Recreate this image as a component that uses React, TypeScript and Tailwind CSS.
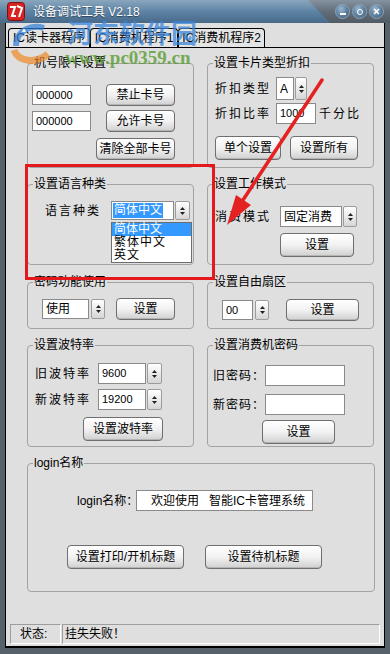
import * as React from "react";

function cn(...c: (string | false | undefined)[]) {
  return c.filter(Boolean).join(" ");
}

function Btn({ className, children }: { className?: string; children: React.ReactNode }) {
  return (
    <div
      className={cn(
        "flex shrink-0 items-center justify-center rounded-[4px] border border-[#6f6f6f] bg-linear-to-b from-white via-[#f2f2f2] to-[#d0d0d0] text-[12px] leading-none text-black shadow-[inset_0_-1px_0_#b5b5b5]",
        className,
      )}
    >
      {children}
    </div>
  );
}

function Spin({ className }: { className?: string }) {
  return (
    <div
      className={cn(
        "flex shrink-0 flex-col items-center justify-center gap-[2px] rounded-[2px] border border-[#9c9c9c] bg-linear-to-b from-white to-[#d6d6d6]",
        className,
      )}
    >
      <svg width="5" height="3" viewBox="0 0 5 3">
        <path d="M2.5 0L5 3H0z" fill="#222" />
      </svg>
      <svg width="5" height="3" viewBox="0 0 5 3">
        <path d="M0 0h5L2.5 3z" fill="#222" />
      </svg>
    </div>
  );
}

function Field({ className, children }: { className?: string; children?: React.ReactNode }) {
  return (
    <div
      className={cn(
        "flex shrink-0 items-center overflow-hidden border border-[#8a8a8a] bg-white pl-[3px] text-[11px] leading-none text-black",
        className,
      )}
    >
      {children}
    </div>
  );
}

function Label({ className, children }: { className?: string; children: React.ReactNode }) {
  return (
    <span className={cn("shrink-0 whitespace-nowrap text-[12px] leading-none text-black", className)}>
      {children}
    </span>
  );
}

function Group({
  title,
  className,
  children,
}: {
  title: string;
  className?: string;
  children?: React.ReactNode;
}) {
  return (
    <fieldset className={cn("relative min-w-0 shrink-0 rounded-[4px] border border-[#a3a3a3]", className)}>
      <legend className="ml-[5px] px-[1px] text-[12px] leading-[14px] text-black">{title}</legend>
      {children}
    </fieldset>
  );
}

function Tab({ className, children }: { className?: string; children: React.ReactNode }) {
  return (
    <div
      className={cn(
        "flex h-[19px] items-center justify-center rounded-t-[4px] border border-b-0 border-black bg-[#e4e4e4] text-[12px] leading-none text-black",
        className,
      )}
    >
      {children}
    </div>
  );
}

function Circle({ children }: { children: React.ReactNode }) {
  return (
    <div className="flex h-[15px] w-[15px] items-center justify-center rounded-full border border-[#8fa3b5] bg-radial-[at_40%_30%] from-[#9cb7cf] via-[#5f82a2] to-[#3b5874]">
      {children}
    </div>
  );
}

function TitleBar() {
  return (
    <div className="flex h-[23px] shrink-0 bg-linear-to-b from-[#8592a0] via-[#626e7a] to-[#4f5a64]">
      <div className="flex w-[330px] items-center bg-linear-to-b from-[#8aa6bd] via-[#5d84a5] to-[#48698a] pl-[7px] [clip-path:polygon(0_0,308px_0,330px_100%,0_100%)]">
        <svg width="18" height="19" viewBox="0 0 18 19">
          <rect x="0.5" y="0.5" width="17" height="18" rx="3" fill="#d92323" stroke="#7a1010" />
          <path d="M3 5h5l-3 9h4" fill="none" stroke="#fff" strokeWidth="2" />
          <path d="M10 4l5 2-3 9" fill="none" stroke="#fff" strokeWidth="2" />
        </svg>
        <span className="ml-[8px] text-[12px] leading-none text-white [text-shadow:0_1px_1px_rgba(0,0,0,0.45)]">
          设备调试工具 V2.18
        </span>
      </div>
      <div className="ml-auto mr-[6px] flex items-center gap-[2px]">
        <Circle>
          <span className="mt-[4px] h-[2px] w-[6px] bg-white" />
        </Circle>
        <Circle>
          <span className="h-[6px] w-[6px] rounded-full border-[1.5px] border-white" />
        </Circle>
        <Circle>
          <svg width="7" height="7" viewBox="0 0 7 7">
            <path d="M1 1l5 5M6 1L1 6" stroke="#fff" strokeWidth="1.5" />
          </svg>
        </Circle>
      </div>
    </div>
  );
}

function Annotations() {
  return (
    <>
      <div className="pointer-events-none absolute left-[8px] top-[20px] opacity-70">
        <svg width="56" height="44" viewBox="0 0 56 44">
          <path d="M8 26 C8 10 24 4 36 8" fill="none" stroke="#2f7fd8" strokeWidth="6" />
          <path d="M6 30 C10 42 28 44 40 34" fill="none" stroke="#f08a2a" strokeWidth="7" />
          <path d="M14 12l2 -4 2 4z" fill="#ffffff" />
        </svg>
      </div>
      <div className="pointer-events-none absolute left-[67px] top-[18px] font-['Noto_Sans_CJK_SC',sans-serif] text-[26px] font-bold leading-[28px] text-[#3b86da] opacity-75">
        河东软件园
      </div>
      <div className="pointer-events-none absolute left-[65px] top-[48px] font-['Liberation_Serif',serif] text-[19px] font-bold leading-none text-[#5a9e32] opacity-80">
        www.pc0359.cn
      </div>
      <div className="pointer-events-none absolute left-[25px] top-[164px] h-[116px] w-[190px] border-[3px] border-[#e3191c]" />
      <svg className="pointer-events-none absolute left-0 top-0" width="390" height="654" viewBox="0 0 390 654">
        <line x1="322" y1="80" x2="243" y2="200" stroke="#e42222" strokeWidth="3.5" strokeLinecap="round" />
        <polygon points="227,225 251,205 236,195" fill="#e42222" />
      </svg>
    </>
  );
}

export default function App() {
  return (
    <div className="relative flex h-[654px] w-[390px] flex-col overflow-hidden bg-[#56616c] font-['Liberation_Sans','Noto_Sans_CJK_SC',sans-serif] text-black">
      <TitleBar />
      <div className="mx-[5px] mb-[6px] flex flex-1 flex-col border-b-2 border-l border-r border-black bg-[#dfdfdf]">
        <div className="flex h-[24px] shrink-0 items-end pl-[2px]">
          <Tab className="w-[82px]">IC读卡器程序</Tab>
          <Tab className="w-[88px]">IC消费机程序1</Tab>
          <Tab className="w-[87px]">IC消费机程序2</Tab>
        </div>

        <div className="flex flex-1 flex-col border-t border-black pl-[21px] pt-[8px]">
          {/* row 1 */}
          <div className="flex gap-[13px]">
            <Group title="机号限卡设置" className="h-[112px] w-[167px]">
              <div className="mt-[14px] flex h-[22px] items-center">
                <Field className="ml-[4px] h-[20px] w-[59px]">000000</Field>
                <Btn className="ml-[15px] h-[22px] w-[69px]">禁止卡号</Btn>
              </div>
              <div className="mt-[4px] flex h-[22px] items-center">
                <Field className="ml-[4px] h-[20px] w-[59px]">000000</Field>
                <Btn className="ml-[15px] h-[22px] w-[69px]">允许卡号</Btn>
              </div>
              <Btn className="ml-[68px] mt-[6px] h-[22px] w-[79px]">清除全部卡号</Btn>
            </Group>
            <Group title="设置卡片类型折扣" className="h-[112px] w-[167px]">
              <div className="mt-[7px] flex h-[23px] items-center">
                <Label className="ml-[7px] w-[56px] tracking-[2px]">折扣类型</Label>
                <Field className="ml-[5px] h-[23px] w-[18px] text-[12px]">A</Field>
                <Spin className="ml-[1px] h-[23px] w-[12px]" />
              </div>
              <div className="mt-[3px] flex h-[21px] items-center">
                <Label className="ml-[7px] w-[56px] tracking-[2px]">折扣比率</Label>
                <Field className="ml-[5px] h-[21px] w-[40px]">1000</Field>
                <Label className="ml-[3px] tracking-[2px]">千分比</Label>
              </div>
              <div className="mt-[12px] flex">
                <Btn className="ml-[7px] h-[24px] w-[66px]">单个设置</Btn>
                <Btn className="ml-[9px] h-[24px] w-[68px]">设置所有</Btn>
              </div>
            </Group>
          </div>

          {/* row 2 */}
          <div className="mt-[9px] flex gap-[13px]">
            <Group title="设置语言种类" className="h-[88px] w-[167px]">
              <div className="mt-[10px] flex h-[19px] items-center">
                <Label className="ml-[17px] w-[60px] tracking-[2px]">语言种类</Label>
                <div className="relative ml-[6px] flex shrink-0">
                  <div className="flex h-[19px] w-[63px] items-center border border-[#8a8a8a] bg-white pl-[1px]">
                    <span className="bg-[#3399ff] px-[1px] text-[12px] leading-[15px] text-white">简体中文</span>
                  </div>
                  <Spin className="ml-[1px] h-[19px] w-[15px]" />
                  <div className="absolute left-0 top-[21px] z-10 flex w-[81px] flex-col border border-[#6d6d6d] bg-white">
                    <span className="h-[13px] bg-[#3399ff] pl-[2px] text-[12px] leading-[13px] text-white">简体中文</span>
                    <span className="h-[13px] pl-[2px] text-[12px] leading-[13px] tracking-[1px]">繁体中文</span>
                    <span className="h-[13px] pl-[2px] text-[12px] leading-[13px] tracking-[1px]">英文</span>
                  </div>
                </div>
              </div>
            </Group>
            <Group title="设置工作模式" className="h-[88px] w-[167px]">
              <div className="mt-[15px] flex h-[21px] items-center">
                <Label className="ml-[7px] w-[60px] tracking-[2px]">消费模式</Label>
                <Field className="ml-[5px] h-[21px] w-[62px] text-[12px]">固定消费</Field>
                <Spin className="ml-[1px] h-[21px] w-[14px]" />
              </div>
              <Btn className="ml-[72px] mt-[6px] h-[24px] w-[74px]">设置</Btn>
            </Group>
          </div>

          {/* row 3 */}
          <div className="mt-[10px] flex gap-[13px]">
            <Group title="密码功能使用" className="h-[54px] w-[167px]">
              <div className="mt-[9px] flex h-[22px] items-center">
                <Field className="ml-[14px] h-[20px] w-[47px] text-[12px]">使用</Field>
                <Spin className="ml-[2px] h-[20px] w-[14px]" />
                <Btn className="ml-[11px] h-[22px] w-[59px]">设置</Btn>
              </div>
            </Group>
            <Group title="设置自由扇区" className="h-[54px] w-[167px]">
              <div className="mt-[10px] flex h-[22px] items-center">
                <Field className="ml-[14px] h-[20px] w-[31px]">00</Field>
                <Spin className="ml-[2px] h-[20px] w-[14px]" />
                <Btn className="ml-[17px] h-[22px] w-[73px]">设置</Btn>
              </div>
            </Group>
          </div>

          {/* row 4 */}
          <div className="mt-[9px] flex gap-[13px]">
            <Group title="设置波特率" className="h-[109px] w-[167px]">
              <div className="mt-[11px] flex h-[21px] items-center">
                <Label className="ml-[7px] w-[58px] tracking-[2px]">旧波特率</Label>
                <Field className="ml-[5px] h-[21px] w-[48px]">9600</Field>
                <Spin className="ml-[1px] h-[21px] w-[15px]" />
              </div>
              <div className="mt-[5px] flex h-[21px] items-center">
                <Label className="ml-[7px] w-[58px] tracking-[2px]">新波特率</Label>
                <Field className="ml-[5px] h-[21px] w-[48px]">19200</Field>
                <Spin className="ml-[1px] h-[21px] w-[15px]" />
              </div>
              <Btn className="ml-[55px] mt-[7px] h-[24px] w-[80px]">设置波特率</Btn>
            </Group>
            <Group title="设置消费机密码" className="h-[109px] w-[167px]">
              <div className="mt-[13px] flex h-[21px] items-center">
                <Label className="ml-[5px] w-[52px] tracking-[1px]">旧密码：</Label>
                <Field className="h-[21px] w-[80px]" />
              </div>
              <div className="mt-[8px] flex h-[21px] items-center">
                <Label className="ml-[5px] w-[52px] tracking-[1px]">新密码：</Label>
                <Field className="h-[21px] w-[80px]" />
              </div>
              <Btn className="ml-[54px] mt-[5px] h-[24px] w-[73px]">设置</Btn>
            </Group>
          </div>

          {/* row 5 */}
          <div className="mt-[9px] flex">
            <Group title="login名称" className="h-[136px] w-[348px]">
              <div className="mt-[20px] flex h-[21px] items-center">
                <Label className="ml-[49px] w-[59px] text-[11.5px]">login名称：</Label>
                <Field className="h-[21px] w-[177px] whitespace-pre pl-[14px] text-[12px]">欢迎使用   智能IC卡管理系统</Field>
              </div>
              <div className="mt-[34px] flex">
                <Btn className="ml-[39px] h-[24px] w-[117px]">设置打印/开机标题</Btn>
                <Btn className="ml-[21px] h-[24px] w-[117px]">设置待机标题</Btn>
              </div>
            </Group>
          </div>
        </div>

        <div className="mb-[2px] flex h-[20px] shrink-0">
          <div className="ml-[4px] flex w-[51px] items-center border border-b-white border-l-[#9d9d9d] border-r-white border-t-[#9d9d9d] pl-[9px] text-[12px] leading-none">
            状态:
          </div>
          <div className="ml-[1px] flex w-[318px] items-center border border-b-white border-l-[#9d9d9d] border-r-white border-t-[#9d9d9d] pl-[2px] text-[12px] leading-none">
            挂失失败！
          </div>
        </div>
      </div>
      <Annotations />
    </div>
  );
}
